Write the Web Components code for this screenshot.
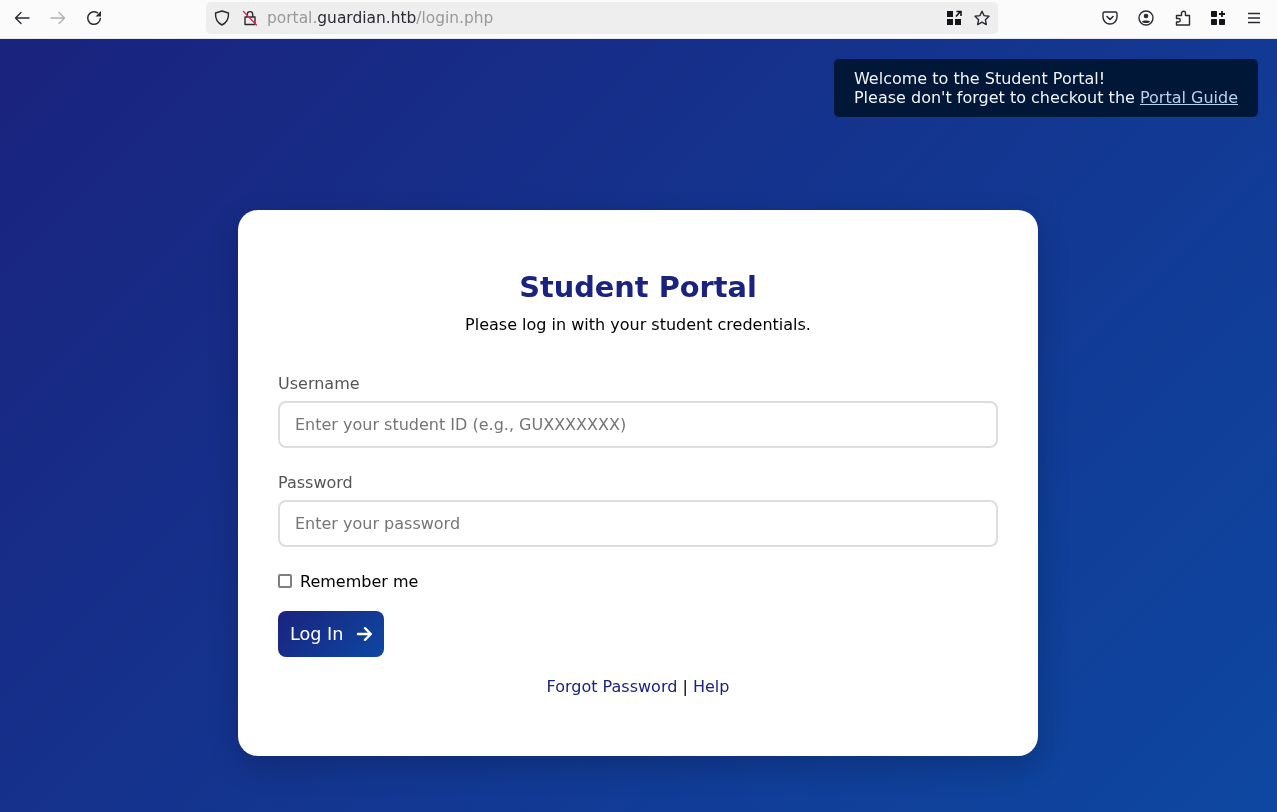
<!DOCTYPE html>
<html lang="en"><head><meta charset="utf-8"><title>Student Portal</title>
<style>
html,body{margin:0;padding:0;height:100%;overflow:hidden}
body{font-family:"DejaVu Sans",sans-serif;font-size:16px;display:flex;flex-direction:column;height:812px}
</style></head><body>
<browser-bar></browser-bar>
<portal-page>
<portal-toast slot="toast">Welcome to the Student Portal!<br>Please don't forget to checkout the <a href="#">Portal Guide</a></portal-toast>
<login-card></login-card>
</portal-page>
<script>
function def(name,html){customElements.define(name,class extends HTMLElement{constructor(){super();this.attachShadow({mode:'open'}).innerHTML=html}})}
const s='fill="none" stroke="#2b2a33" stroke-width="1.4" stroke-linecap="round" stroke-linejoin="round"';
def('browser-bar',`<style>
:host{display:flex;align-items:center;height:36px;padding-bottom:2px;background:#fbfbfc;border-bottom:1px solid #e6e6ee;flex:none;position:relative;box-sizing:content-box;font-family:"DejaVu Sans",sans-serif;will-change:transform}
.btn{width:16px;height:16px;display:block;flex:none}
.nav{display:flex;gap:20px;margin-left:14px}
.url{margin-left:104px;width:792px;height:32px;background:#eeeeee;border-radius:5px;display:flex;align-items:center;flex:none}
.url .a{margin-left:8px}.url .b{margin-left:12px}
.addr{margin-left:9px;font-size:15.45px;color:#999;white-space:nowrap}
.addr b{font-weight:400;color:#2b2a33}
.sp{flex:1}
.r{display:flex;gap:12px;margin-right:8px}
.tools{display:flex;gap:20px;margin-left:104px}
</style>
<div class="nav">
<svg class="btn" viewBox="0 0 16 16" ${s}><path d="M15 8H1.500M7 2.500 1.500 8 7 13.500"/></svg>
<svg class="btn" viewBox="0 0 16 16" fill="none" stroke="#b0b0b5" stroke-width="1.400" stroke-linecap="round" stroke-linejoin="round"><path d="M1 8h13.500M9 2.500 14.500 8 9 13.500"/></svg>
<svg class="btn" viewBox="0 0 16 16"><path d="M14.300 8.500A6.300 6.300 0 1 1 11.500 2.800" fill="none" stroke="#2b2a33" stroke-width="1.500" stroke-linecap="round"/><path fill="#2b2a33" d="M15 1v5.500H9.500Z"/></svg>
</div>
<div class="url">
<svg class="btn a" viewBox="0 0 16 16" ${s}><path d="M8 1 14.500 3C14.800 9 12.500 12.800 8 15 3.500 12.800 1.200 9 1.500 3Z"/></svg>
<svg class="btn b" viewBox="0 0 16 16" ${s}><path d="M5.300 7V4.300a2.700 2.700 0 0 1 5.400 0V7M3 7h10v7.500H3Z"/><path d="M1.500 1.500 14.500 15" stroke="#e22850" stroke-width="1.300"/></svg>
<span class="addr">portal.<b>guardian.htb</b>/login.php</span>
<span class="sp"></span>
<div class="r">
<svg class="btn" viewBox="0 0 16 16"><path fill="#15141a" d="M1 1h6v6H1zM1 9h6v6H1zM9 9h6v6H9z"/><path d="M10 6.500 14 2M10.500 1.500h4.500v4.500" fill="none" stroke="#15141a" stroke-width="1.600"/></svg>
<svg class="btn" viewBox="0 0 16 16" ${s}><path d="M8 1.200 10.100 5.600 15 6.300 11.400 9.700 12.300 14.600 8 12.200 3.700 14.600 4.600 9.700 1 6.300 5.900 5.600Z"/></svg>
</div></div>
<div class="tools">
<svg class="btn" viewBox="0 0 16 16" ${s}><path d="M2.500 2h11A1.500 1.500 0 0 1 15 3.500V7A7 7 0 0 1 1 7V3.500A1.500 1.500 0 0 1 2.500 2Z"/><path d="M5 6.500 8 9.500 11 6.500" stroke-width="1.600"/></svg>
<svg class="btn" viewBox="0 0 16 16"><circle cx="8" cy="8" r="7" fill="none" stroke="#2b2a33" stroke-width="1.400"/><circle cx="8" cy="6" r="2.300" fill="#2b2a33"/><path fill="#2b2a33" d="M3.800 11.800C5 10 11 10 12.200 11.800 11 13.400 5 13.400 3.800 11.800Z"/></svg>
<svg class="btn" viewBox="0 0 16 16" ${s} style="margin-left:1px;margin-right:-1px"><path d="M1.500 15V12H3.500A1.500 1.500 0 0 0 3.500 8.500H1.500V5.500H6.500V3.300A2 2 0 0 1 10.500 3.300V5.500H14.500V15Z"/></svg>
<svg class="btn" viewBox="0 0 16 16"><path fill="#15141a" d="M1.800 1h4.400q.8 0 .8.800v4.400q0 .8-.8.800H1.800Q1 7 1 6.200V1.800Q1 1 1.800 1ZM1.800 9h4.400q.8 0 .8.800v4.400q0 .8-.8.800H1.800Q1 15 1 14.200V9.800Q1 9 1.800 9ZM9.800 9h4.400q.8 0 .8.800v4.400q0 .8-.8.800H9.800Q9 15 9 14.200V9.800Q9 9 9.800 9Z"/><path d="M12 1v6M9 4h6" stroke="#15141a" stroke-width="1.800"/></svg>
<svg class="btn" viewBox="0 0 16 16" fill="none" stroke="#2b2a33" stroke-width="1.300"><path d="M2 3.500h12M2 8h12M2 12.500h12"/></svg>
</div>`);
def('portal-page',`<style>
:host{display:flex;flex-direction:column;align-items:center;flex:1;position:relative;padding:171px 1px 0 0;box-sizing:border-box;background:linear-gradient(135deg,#1a237e,#0d47a1);will-change:transform}
</style><slot name="toast"></slot><slot></slot>`);
def('portal-toast',`<style>
:host{display:block;position:absolute;top:20px;right:19px;background:#001737;color:#f0f4f8;padding:10px 20px;border-radius:5px;line-height:19px;white-space:nowrap}
::slotted(a){color:#b3d4ec;text-decoration:underline}
</style><slot></slot>`);
customElements.define('labelled-input',class extends HTMLElement{constructor(){super();this.attachShadow({mode:'open'}).innerHTML=`<style>
:host{display:block;margin-bottom:25px}
label{display:block;color:#555;margin-bottom:8px;line-height:19px}
input{display:block;box-sizing:border-box;width:100%;height:47px;padding:0 15px;border:2px solid #ddd;border-radius:8px;font:16px "DejaVu Sans",sans-serif;outline:none;background:#fff}
input::placeholder{color:#757575}
</style><label>${this.getAttribute('label')}</label><input type="${this.getAttribute('type')}" placeholder="${this.getAttribute('placeholder')}">`}});
def('login-card',`<style>
:host{display:block;box-sizing:border-box;width:800px;height:546px;padding:60px 40px 40px;background:#fff;border-radius:20px;box-shadow:0 10px 30px rgba(0,0,0,.2);color:#000}
h1{margin:0 0 11px;text-align:center;font-size:28.800px;line-height:34px;color:#1a237e;font-weight:700}
p{margin:0 0 40px;text-align:center;line-height:19px}
.rem{display:flex;align-items:center;gap:8px;line-height:19px}
.rem input{margin:0 0 1px;width:14px;height:14px;flex:none;appearance:none;border:2px solid #808080;border-radius:2px;background:#fff;box-sizing:border-box}
button{display:flex;align-items:center;justify-content:space-between;margin-top:20px;height:46px;width:106px;padding:0 12px;box-sizing:border-box;border:0;border-radius:8px;color:#fff;font:17.6px "DejaVu Sans",sans-serif;white-space:nowrap;background:linear-gradient(135deg,#1a237e,#0d47a1)}
.links{margin-top:20px;text-align:center;line-height:19px}
a{color:#1a237e;text-decoration:none}
</style>
<h1>Student Portal</h1>
<p>Please log in with your student credentials.</p>
<labelled-input label="Username" type="text" placeholder="Enter your student ID (e.g., GUXXXXXXX)"></labelled-input>
<labelled-input label="Password" type="password" placeholder="Enter your password"></labelled-input>
<label class="rem"><input type="checkbox">Remember me</label>
<button type="button">Log In<svg width="17" height="16" viewBox="0 0 17 16" fill="none" stroke="#fff" stroke-width="2.400" stroke-linecap="round" stroke-linejoin="round"><path d="M3 8h12.800M10 2.200 15.800 8 10 13.800"/></svg></button>
<div class="links"><a href="#">Forgot Password</a> | <a href="#">Help</a></div>`);
</script>
</body></html>
